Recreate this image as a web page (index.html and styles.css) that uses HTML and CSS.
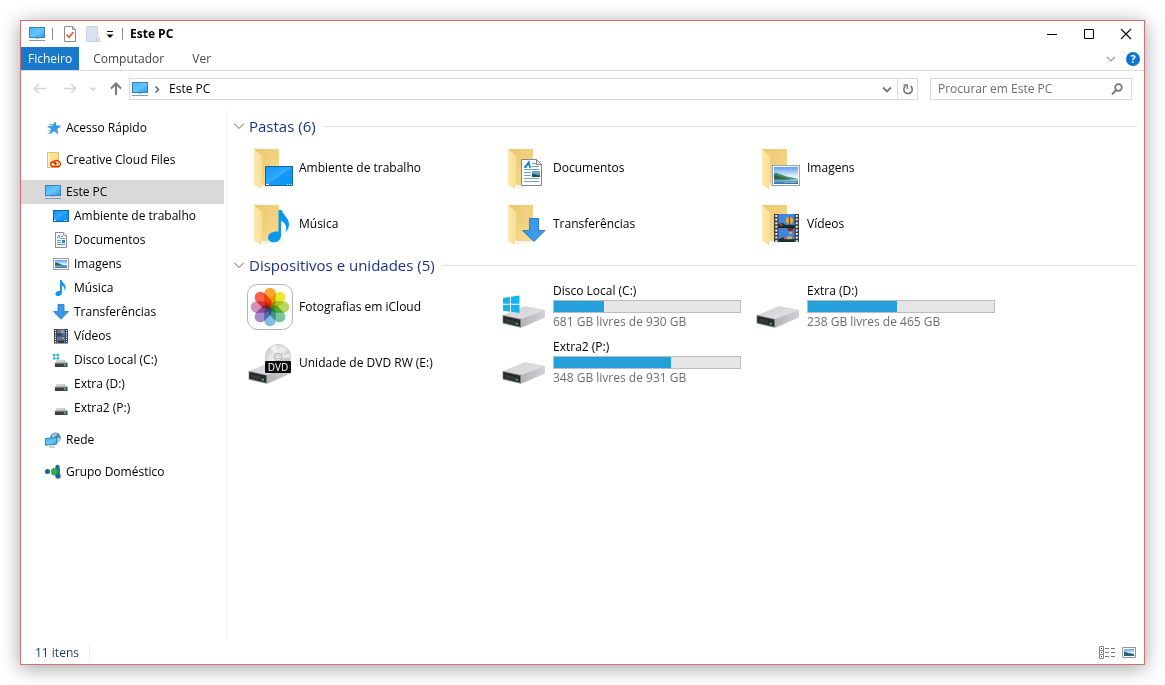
FILE: index.html
```
<!DOCTYPE html>
<html lang="pt">
<head>
    <meta charset="UTF-8">
    <meta name="viewport" content="width=device-width, initial-scale=1.0">
    <title>Este PC</title>
    <link rel="stylesheet" href="styles.css">
</head>
<body>

<!--Ícones-->
<svg class="defs" aria-hidden="true">
    <defs>
        <linearGradient id="azul" x1="0" y1="0" x2="1" y2="1">
            <stop offset="0" stop-color="#45b4fb"/><stop offset=".5" stop-color="#62c6ff"/><stop offset="1" stop-color="#2e9eec"/>
        </linearGradient>
        <linearGradient id="trabalho" x1="0" y1="0" x2="1" y2="1">
            <stop offset="0" stop-color="#1193f5"/><stop offset=".5" stop-color="#33aaff"/><stop offset=".51" stop-color="#149bfa"/><stop offset="1" stop-color="#0d93f2"/>
        </linearGradient>
        <linearGradient id="amarelo" x1="0" y1="0" x2="1" y2="1">
            <stop offset="0" stop-color="#e9c76f"/><stop offset="1" stop-color="#f9dc8e"/>
        </linearGradient>
        <linearGradient id="aba" x1="0" y1="0" x2="1" y2="0">
            <stop offset="0" stop-color="#fde9ae"/><stop offset="1" stop-color="#f8dd94"/>
        </linearGradient>
        <linearGradient id="ceu" x1="0" y1="0" x2="0" y2="1">
            <stop offset="0" stop-color="#5b9ff0"/><stop offset=".5" stop-color="#d9edfb"/><stop offset="1" stop-color="#ffffff"/>
        </linearGradient>
        <linearGradient id="mar" x1="0" y1="0" x2="0" y2="1">
            <stop offset="0" stop-color="#8fc3dc"/><stop offset="1" stop-color="#2a6ea3"/>
        </linearGradient>
        <linearGradient id="tampa" x1="0" y1="0" x2="1" y2="1">
            <stop offset="0" stop-color="#cfcfd1"/><stop offset="1" stop-color="#e6e6e8"/>
        </linearGradient>
        <linearGradient id="lado" x1="0" y1="0" x2="1" y2="0">
            <stop offset="0" stop-color="#b4b4b8"/><stop offset="1" stop-color="#d2d2d5"/>
        </linearGradient>
        <linearGradient id="disco" x1="0" y1="0" x2="1" y2="1">
            <stop offset="0" stop-color="#bfc4c6"/><stop offset=".45" stop-color="#eceeee"/><stop offset=".6" stop-color="#cdd1d2"/><stop offset="1" stop-color="#b8bdbf"/>
        </linearGradient>
    </defs>

    <symbol id="i-pc" viewBox="0 0 16 16">
        <rect x=".5" y="1.500" width="15" height="10" fill="url(#azul)" stroke="#3f7fa8"/>
        <path d="M6 12h4v1H6z" fill="#a9c4d4"/>
        <path d="M0 14.500h16" stroke="#7d9db5"/>
    </symbol>
    <symbol id="i-estrela" viewBox="0 0 16 16">
        <path d="M10.300 2l.8 3.900 4.400.3-3.700 2.500.9 4.800-3.600-2.700-4.200 2.900 1.500-4.700-3-2.500 4.200-.4z" fill="#2fa0e8" stroke="#2384c6" stroke-width=".7"/>
        <path d="M4 4.500h4M2.500 7.500h3M3.500 10.500h3M2.500 13h3" stroke="#6fb9ea" stroke-width=".9"/>
    </symbol>
    <symbol id="i-creative" viewBox="0 0 16 16">
        <path d="M2.500.5h11v15h-11z" fill="#fbe08f" stroke="#dfc06a"/>
        <path d="M3 1h2v14H3z" fill="#fff0bf"/>
        <path d="M12.500 14.500H8.300a2.400 2.400 0 1 1 .5-4.700c1.400.2 2 1.600 2.800 2.400M11 12.800c-1.300-1-1.300-2.300-2.500-2.700A3.400 3.400 0 0 1 14.400 10a2.500 2.500 0 0 1-1.900 4.500" fill="none" stroke="#dd2a12" stroke-width="1.300"/>
    </symbol>
    <symbol id="i-trabalho" viewBox="0 0 16 16">
        <rect x=".5" y="2.500" width="15" height="11" fill="url(#trabalho)" stroke="#0c67ad"/>
        <path d="M1 12.500h2M11 12.500h1M13 12.500h1" stroke="#fff"/>
    </symbol>
    <symbol id="i-doc" viewBox="0 0 16 16">
        <path d="M2.500.5h8l3 3v12h-11z" fill="#fff" stroke="#8b8f93"/>
        <path d="M10.500.5v3h3" fill="#e9eaeb" stroke="#8b8f93" stroke-width=".8"/>
        <path d="M4 6.500L6 3l1 3.500M8 4.500h2M8 6.500h4M4 8.500h4M4 10.500h4M4 12.500h8" fill="none" stroke="#3a93bd" stroke-width=".9"/>
        <path d="M9 8h3v3H9z" fill="#3f7d91"/>
    </symbol>
    <symbol id="i-imagem" viewBox="0 0 16 16">
        <rect x=".5" y="2.500" width="15" height="11" fill="#fff" stroke="#9aa0a5"/>
        <path d="M2 4h12v8H2z" fill="url(#ceu)"/>
        <path d="M2 6.500c2 0 3 .5 5 1.500s4 1.200 7 1.300V10H2z" fill="#2e5b50"/>
        <path d="M2 9.500h12V12H2z" fill="url(#mar)"/>
    </symbol>
    <symbol id="i-musica" viewBox="0 0 16 16">
        <path d="M7 0h1.600c.3 2.600 4.500 4 4 8.300-.1 1-.6 1.900-1.200 2.600.6-2.800-.7-4.600-2.500-5.500V12.500c0 2-1.400 3.500-3.600 3.500-1.700 0-2.900-.9-2.900-2.300C2.400 12 4.200 10.800 7 11z" fill="#1096ee"/>
    </symbol>
    <symbol id="i-seta" viewBox="0 0 16 16">
        <path d="M5 .5h6v7h4.500L8 15.300.5 7.500H5z" fill="#3b98e6" stroke="#2479c4" stroke-width=".8"/>
    </symbol>
    <symbol id="i-video" viewBox="0 0 16 16">
        <path d="M1 1h14v14.500H1z" fill="#3a3a3c"/>
        <path d="M4 1.500h8v6.200H4zM4 8.500h8V15H4z" fill="#4a78bd"/>
        <path d="M8 2h3v3H8zM9 9h2v2H9z" fill="#c9963c"/>
        <path d="M4 5.500h5v2H4zM5 12.500h6V15H5z" fill="#30383a"/>
        <path d="M2.500 2v13M13.500 2v13" stroke="#fff" stroke-width="1.200" stroke-dasharray="1.200 1"/>
    </symbol>
    <symbol id="i-drive" viewBox="0 0 16 16">
        <path d="M4 8h8.500l2 3H2z" fill="#cfd0d2"/>
        <path d="M2 11h12.500v4H2z" fill="#3c4143"/>
        <path d="M2 11.200h12.500" stroke="#85898b"/>
        <path d="M11 12.500h2v1.200h-2z" fill="#6be08b"/>
    </symbol>
    <symbol id="i-drivewin" viewBox="0 0 16 16">
        <use href="#i-drive"/>
        <path d="M0 2h2.500v2.200H0zM3.500 2H6v2.200H3.500zM0 5.200h2.500v2.200H0zM3.500 5.200H6v2.200H3.500z" fill="#1fb2dd"/>
    </symbol>
    <symbol id="i-rede" viewBox="0 0 16 16">
        <circle cx="10.500" cy="5.800" r="5.300" fill="#4a8db4"/>
        <path d="M7 3.500c1-2 4-2.500 5.500-1.500-.5 1.500-2 1-2.500 2.500s-2 1.500-3 1zM12 6c1.500-.8 3 0 3.500.5-.3 2-1.500 3.500-3 4z" fill="#9fd0e4"/>
        <path d="M.5 6.500l11-.8v6.500l-11 1z" fill="url(#azul)" stroke="#3c83b4"/>
        <path d="M4 15h6" stroke="#86a9c0"/>
    </symbol>
    <symbol id="i-grupo" viewBox="0 0 16 16">
        <path d="M9 7.500L12 2v12z" fill="#249b64"/>
        <circle cx="9.500" cy="7.800" r="3.700" fill="#36b14a"/>
        <circle cx="2.500" cy="7.500" r="2.500" fill="#1e5a9c"/>
        <circle cx="12.500" cy="3" r="2.200" fill="#1b6a94"/>
        <circle cx="13" cy="12" r="2.700" fill="#20659f"/>
        <path d="M11 4.500l4-.5v6.500l-3-.5z" fill="#238a7c"/>
    </symbol>

    <symbol id="g-pasta" viewBox="0 0 48 48">
        <path d="M12 41l6 3.500 16-3z" fill="#000" opacity=".06"/>
        <path d="M8 5h25v36H12z" fill="url(#amarelo)"/>
        <path d="M8 5l8.500 7.500V39l-1.500 6-7-4z" fill="url(#aba)"/>
        <path d="M16.500 38.500V45L15 45z" fill="#fff"/>
        <path d="M16.500 12.500V39" stroke="#ecd07f" stroke-width=".7"/>
    </symbol>
    <symbol id="g-trabalho" viewBox="0 0 48 48">
        <use href="#g-pasta"/>
        <rect x="19.500" y="22.500" width="27" height="19" fill="url(#trabalho)" stroke="#15699e"/>
        <path d="M20 40.500h3M41 40.500h1M43 40.500h1M45 40.500h1" stroke="#fff"/>
    </symbol>
    <symbol id="g-doc" viewBox="0 0 48 48">
        <use href="#g-pasta"/>
        <path d="M21.500 15.500h15l5 5v21h-20z" fill="#fff" stroke="#85888b"/>
        <path d="M36.500 15.500v5h5z" fill="#e6e7e8" stroke="#85888b"/>
        <path d="M25 23l4-5.500 1 5.500M26.500 21h3M24 23h3M29 23h2" fill="none" stroke="#1382cb" stroke-width="1.300"/>
        <path d="M32 19.500h4M32 22.500h7M24 25.500h15M24 28.500h7M24 31.500h7M24 34.500h15M24 37.500h15" stroke="#7d9fba"/>
        <path d="M32 27h8v6h-8z" fill="#68a5d6"/>
        <path d="M32 29.500l4 1 4 1V33h-8z" fill="#285348"/>
    </symbol>
    <symbol id="g-imagem" viewBox="0 0 48 48">
        <use href="#g-pasta"/>
        <rect x="18.500" y="21.500" width="27" height="20" fill="#fff" stroke="#9aa2a9"/>
        <path d="M20 23h24v17H20z" fill="url(#ceu)"/>
        <path d="M20 35h24v5H20z" fill="url(#mar)"/>
        <path d="M20 29c3-1 5 1 7 1.500 3 .5 4 2 8 2.500s6 1.500 9 2l-24 .5z" fill="#4a8a72"/>
        <path d="M20 31c4 0 6 2 9 2.500l8 2H20z" fill="#2f6646"/>
        <path d="M31 36.500h12M30 38.500h12" stroke="#a9cfe2" stroke-width=".6"/>
    </symbol>
    <symbol id="g-musica" viewBox="0 0 48 48">
        <use href="#g-pasta"/>
        <path d="M32.500 10H36c.5 5 7.500 8 7 15-.2 2.800-1.800 5.500-3.700 7.500 2-5.500.5-9.500-4.300-11.500v14.500c0 4-3 6.800-7 6.800-3.600 0-6-1.800-6-4.800 0-4 4.500-6.500 10.500-6z" fill="#0c97ef"/>
    </symbol>
    <symbol id="g-seta" viewBox="0 0 48 48">
        <use href="#g-pasta"/>
        <path d="M29.500 18.500h9v12H45L34 41.500l-11.500-11h7z" fill="#3c9aea" stroke="#2a7bc6"/>
    </symbol>
    <symbol id="g-video" viewBox="0 0 48 48">
        <use href="#g-pasta"/>
        <path d="M20 14h25v28H20z" fill="#3d3d3f"/>
        <path d="M24.500 14h16v13h-16zM24.500 28h16v14h-16z" fill="#4285dc"/>
        <circle cx="35.500" cy="20.500" r="3.500" fill="#e8b92e"/>
        <path d="M34.700 17h1.600v7h-1.600z" fill="#b3342a"/>
        <path d="M34.500 24.500h2V26h-2z" fill="#3a2418"/>
        <path d="M24.500 24l4-1 3 2h9v2h-16zM24.500 39l5-1.500 4 2 7-.5v3h-16z" fill="#17302e"/>
        <path d="M33 28h7l-2 3.500h-3z" fill="#8c2430"/>
        <path d="M35 31.500h3V34h-3z" fill="#e0a92c"/>
        <path d="M32.500 39a3 3 0 0 1 6 0z" fill="#dcae37"/>
        <path d="M26 25h2.500M30 38.500h2" stroke="#c95a34" stroke-width="1.500"/>
        <path d="M22.300 15v27M42.800 15v27" stroke="#f2f2f2" stroke-width="2" stroke-dasharray="2 1.600"/>
        <path d="M24 27.500h17" stroke="#1c1c1c"/>
    </symbol>
    <symbol id="g-fotos" viewBox="0 0 48 48">
        <rect x="1.500" y="1.500" width="45" height="45" rx="10" fill="#fff" stroke="#b4b4b6"/>
        <g class="petalas">
            <rect x="18.200" y="4.700" width="11.600" height="19.300" rx="5.800" fill="#fba72f"/>
            <rect x="18.200" y="4.700" width="11.600" height="19.300" rx="5.800" fill="#ece62d" transform="rotate(45 24 24)"/>
            <rect x="18.200" y="4.700" width="11.600" height="19.300" rx="5.800" fill="#b9d85c" transform="rotate(90 24 24)"/>
            <rect x="18.200" y="4.700" width="11.600" height="19.300" rx="5.800" fill="#76c7a0" transform="rotate(135 24 24)"/>
            <rect x="18.200" y="4.700" width="11.600" height="19.300" rx="5.800" fill="#86bde6" transform="rotate(180 24 24)"/>
            <rect x="18.200" y="4.700" width="11.600" height="19.300" rx="5.800" fill="#a58cc8" transform="rotate(225 24 24)"/>
            <rect x="18.200" y="4.700" width="11.600" height="19.300" rx="5.800" fill="#d78fbb" transform="rotate(270 24 24)"/>
            <rect x="18.200" y="4.700" width="11.600" height="19.300" rx="5.800" fill="#f8604a" transform="rotate(315 24 24)"/>
        </g>
    </symbol>
    <symbol id="g-drive" viewBox="0 0 48 48">
        <path d="M3 32l20-8q2-1 4-.5l17 3q1.500.5 1 1.500L22 37z" fill="url(#tampa)"/>
        <path d="M21 36l24-9v7.500l-23 10h-1z" fill="url(#lado)"/>
        <path d="M2.700 32L21 36v8.700L2.700 40.500z" fill="#77797b"/>
        <path d="M3.300 33l16.700 3.800v6.700L3.300 39.500z" fill="#262a2b"/>
        <path d="M5 36.500l9 2M5 38l9 2" stroke="#4b4f50" stroke-width=".7"/>
        <path d="M15.500 39.500l2.500.5v1.800l-2.500-.5z" fill="#4fb35c"/>
    </symbol>
    <symbol id="g-drivewin" viewBox="0 0 48 48">
        <use href="#g-drive"/>
        <path d="M3 15l7-1v6.800H3zM11 13.800l8.500-1.200v8.200H11zM3 21.800h7v6.900l-7-1zM11 21.800h8.500V30L11 28.800z" fill="#12b3ee"/>
    </symbol>
</svg>

<div class="janela">
    <!--Barra de título-->
    <header class="titulo">
        <svg class="ico"><use href="#i-pc"/></svg>
        <span class="divisor"></span>
        <button class="botao" aria-label="Propriedades">
            <svg class="ico" viewBox="0 0 16 16"><path d="M2.500.5h8l3 3v12h-11z" fill="#fff" stroke="#8d8d8d"/><path d="M10.500.5v3h3" fill="none" stroke="#8d8d8d"/><path d="M4.500 8.500l2.500 2.700L11.500 6" fill="none" stroke="#df5a1f" stroke-width="1.600"/></svg>
        </button>
        <button class="botao" aria-label="Nova pasta">
            <svg class="ico" viewBox="0 0 16 16"><path d="M1.500.5h11v11h2v4h-13z" fill="#d9e4f3" stroke="#c9d6e8"/><path d="M11.500 11.500v4" stroke="#b9c9df"/></svg>
        </button>
        <button class="botao" aria-label="Personalizar barra">
            <svg class="seta" viewBox="0 0 8 8"><path d="M1 1.500h6" stroke="#111"/><path d="M.5 4.500h7L4 8z" fill="#111"/></svg>
        </button>
        <span class="divisor"></span>
        <h1>Este PC</h1>
        <div class="controlos">
            <button class="botao" aria-label="Minimizar"><svg viewBox="0 0 12 12"><path d="M1 6.500h10" stroke="#000"/></svg></button>
            <button class="botao" aria-label="Maximizar"><svg viewBox="0 0 12 12"><path d="M1.500 1.500h9v9h-9z" fill="none" stroke="#000"/></svg></button>
            <button class="botao" aria-label="Fechar"><svg viewBox="0 0 12 12"><path d="M1 1l10 10M11 1L1 11" stroke="#000" stroke-width="1.100"/></svg></button>
        </div>
    </header>

    <!--Separadores-->
    <nav class="separadores">
        <a href="#" class="ativo">Ficheiro</a>
        <a href="#">Computador</a>
        <a href="#">Ver</a>
        <div class="ajuda">
            <button class="botao" aria-label="Expandir friso"><svg class="chev" viewBox="0 0 10 10"><path d="M1 3l4 4 4-4" fill="none" stroke="#9a9a9a" stroke-width="1.200"/></svg></button>
            <button class="interrogacao" aria-label="Ajuda">?</button>
        </div>
    </nav>

    <!--Endereço e pesquisa-->
    <div class="navegacao">
        <button class="botao" aria-label="Anterior"><svg class="nav" viewBox="0 0 14 14"><path d="M13 6.500H1.500M6 2L1.300 6.500 6 11" fill="none" stroke="#d6d6d6" stroke-width="1.500"/></svg></button>
        <button class="botao seguinte" aria-label="Seguinte"><svg class="nav" viewBox="0 0 14 14"><path d="M1 6.500h11.500M8 2l4.700 4.500L8 11" fill="none" stroke="#d6d6d6" stroke-width="1.500"/></svg></button>
        <button class="botao" aria-label="Recentes"><svg class="mini" viewBox="0 0 8 8"><path d="M1.500 2.500L4 5l2.500-2.500" fill="none" stroke="#cfcfcf" stroke-width="1.400"/></svg></button>
        <button class="botao" aria-label="Acima"><svg class="nav" viewBox="0 0 14 14"><path d="M7 13V2M2 6.500L7 1.500l5 5" fill="none" stroke="#787878" stroke-width="2"/></svg></button>
        <div class="endereco">
            <svg class="ico"><use href="#i-pc"/></svg>
            <svg class="mini" viewBox="0 0 8 8"><path d="M2.500 1.500L5.500 4.500l-3 3" fill="none" stroke="#666" stroke-width="1.500"/></svg>
            <a href="#">Este PC</a>
            <button class="botao lista" aria-label="Localizações"><svg class="chev" viewBox="0 0 10 10"><path d="M1 3.500l4 4 4-4" fill="none" stroke="#777" stroke-width="1.800"/></svg></button>
            <button class="botao atualizar" aria-label="Atualizar"><svg class="nav" viewBox="0 0 14 14"><path d="M9.500 4a4.200 4.200 0 1 1-5.200.2" fill="none" stroke="#777" stroke-width="1.600"/><path d="M2.500 3H6.300V7" fill="none" stroke="#777" stroke-width="1.500"/></svg></button>
        </div>
        <label class="pesquisa">
            <input type="text" placeholder="Procurar em Este PC" aria-label="Procurar em Este PC">
            <svg class="nav" viewBox="0 0 14 14"><circle cx="8.500" cy="5.500" r="3.300" fill="none" stroke="#777" stroke-width="1.700"/><path d="M6.200 8l-4.200 4.300" stroke="#777" stroke-width="1.900"/></svg>
        </label>
    </div>

    <div class="conteudo">
        <!--Árvore-->
        <nav class="arvore">
            <a href="#"><svg class="ico"><use href="#i-estrela"/></svg>Acesso Rápido</a>
            <a href="#" class="espaco"><svg class="ico"><use href="#i-creative"/></svg>Creative Cloud Files</a>
            <a href="#" class="espaco selecionado"><svg class="ico"><use href="#i-pc"/></svg>Este PC</a>
            <a href="#" class="filho"><svg class="ico"><use href="#i-trabalho"/></svg>Ambiente de trabalho</a>
            <a href="#" class="filho"><svg class="ico"><use href="#i-doc"/></svg>Documentos</a>
            <a href="#" class="filho"><svg class="ico"><use href="#i-imagem"/></svg>Imagens</a>
            <a href="#" class="filho"><svg class="ico"><use href="#i-musica"/></svg>Música</a>
            <a href="#" class="filho"><svg class="ico"><use href="#i-seta"/></svg>Transferências</a>
            <a href="#" class="filho"><svg class="ico"><use href="#i-video"/></svg>Vídeos</a>
            <a href="#" class="filho"><svg class="ico"><use href="#i-drivewin"/></svg>Disco Local (C:)</a>
            <a href="#" class="filho"><svg class="ico"><use href="#i-drive"/></svg>Extra (D:)</a>
            <a href="#" class="filho"><svg class="ico"><use href="#i-drive"/></svg>Extra2 (P:)</a>
            <a href="#" class="espaco"><svg class="ico"><use href="#i-rede"/></svg>Rede</a>
            <a href="#" class="espaco"><svg class="ico"><use href="#i-grupo"/></svg>Grupo Doméstico</a>
        </nav>

        <main class="painel">
            <section>
                <h2><svg class="chev" viewBox="0 0 10 10"><path d="M0 2.500l5 5 5-5" fill="none" stroke="#666"/></svg>Pastas (6)</h2>
                <div class="grelha">
                    <a href="#" class="item"><svg><use href="#g-trabalho"/></svg>Ambiente de trabalho</a>
                    <a href="#" class="item"><svg><use href="#g-doc"/></svg>Documentos</a>
                    <a href="#" class="item"><svg><use href="#g-imagem"/></svg>Imagens</a>
                    <a href="#" class="item"><svg><use href="#g-musica"/></svg>Música</a>
                    <a href="#" class="item"><svg><use href="#g-seta"/></svg>Transferências</a>
                    <a href="#" class="item"><svg><use href="#g-video"/></svg>Vídeos</a>
                </div>
            </section>

            <section>
                <h2><svg class="chev" viewBox="0 0 10 10"><path d="M0 2.500l5 5 5-5" fill="none" stroke="#666"/></svg>Dispositivos e unidades (5)</h2>
                <div class="grelha">
                    <a href="#" class="item"><svg><use href="#g-fotos"/></svg>Fotografias em iCloud</a>
                    <a href="#" class="item"><svg><use href="#g-drivewin"/></svg>
                        <span class="unidade">Disco Local (C:)
                            <progress value="27" max="100" aria-label="Espaço usado em C:"></progress>
                            <small>681 GB livres de 930 GB</small>
                        </span>
                    </a>
                    <a href="#" class="item"><svg><use href="#g-drive"/></svg>
                        <span class="unidade">Extra (D:)
                            <progress value="48" max="100" aria-label="Espaço usado em D:"></progress>
                            <small>238 GB livres de 465 GB</small>
                        </span>
                    </a>
                    <a href="#" class="item">
                        <svg viewBox="0 0 48 48">
                            <use href="#g-drive"/>
                            <circle cx="32" cy="18" r="12.600" fill="url(#disco)" stroke="#b0b4b6" stroke-width=".6"/>
                            <path d="M32 18L24 8.500a12 12 0 0 1 6-2.500zM32 18l12-4a12 12 0 0 1 .5 5z" fill="#fff" opacity=".6"/>
                            <circle cx="32" cy="18" r="3.800" fill="#e1e3e4" stroke="#a0a5a8" stroke-width=".8"/>
                            <circle cx="32" cy="18" r="1.600" fill="#fff" stroke="#a0a5a8" stroke-width=".6"/>
                            <rect x="19" y="22" width="26" height="12" rx="1" fill="#0c0c0c"/>
                            <text x="32" y="32" class="dvd-texto">DVD</text>
                        </svg>
                        Unidade de DVD RW (E:)
                    </a>
                    <a href="#" class="item"><svg><use href="#g-drive"/></svg>
                        <span class="unidade">Extra2 (P:)
                            <progress value="63" max="100" aria-label="Espaço usado em P:"></progress>
                            <small>348 GB livres de 931 GB</small>
                        </span>
                    </a>
                </div>
            </section>
        </main>
    </div>

    <!--Barra de estado-->
    <footer class="estado">
        <span>11 itens</span>
        <div class="vistas">
            <button class="botao" aria-label="Detalhes"><svg class="ico" viewBox="0 0 16 16"><path d="M.5 1.500h4v12h-4zM.5 5.500h4M.5 9.500h4" fill="none" stroke="#8a8a8a"/><path d="M2 3.500h1M2 7.500h1M2 11.500h1" stroke="#444"/><path d="M6 3.500h4M12 3.500h4M6 7.500h4M12 7.500h4M6 11.500h4M12 11.500h4" stroke="#777"/></svg></button>
            <button class="botao" aria-label="Mosaicos"><svg class="ico" viewBox="0 0 16 16"><path d="M1.500 2.500h13v10h-13z" fill="#fff" stroke="#8f959a"/><path d="M3 4h10v7H3z" fill="url(#ceu)"/><path d="M3 6.500l5 1.500 5 1v2H3z" fill="#2c6472"/></svg></button>
        </div>
    </footer>
</div>

</body>
</html>
```
FILE: styles.css
```
* {
    box-sizing: border-box;
}

body {
    margin: 0;
    padding: 20px;
    height: 100vh;
    background-color: #fff;
    color: #000;
    font-family: "Open Sans", "Noto Sans", sans-serif;
    font-size: 12px;
    line-height: 16px;
}

a {
    color: inherit;
    text-decoration: none;
}

svg {
    display: block;
    flex: none;
}

.defs {
    position: absolute;
    width: 0;
    height: 0;
}

.botao {
    display: flex;
    align-items: center;
    justify-content: center;
    border: 0;
    padding: 0;
    background: none;
}

.ico {
    width: 16px;
    height: 16px;
}

.nav {
    width: 14px;
    height: 14px;
}

.chev {
    width: 10px;
    height: 10px;
}

.mini,
.seta {
    width: 8px;
    height: 8px;
}

.janela {
    display: flex;
    flex-direction: column;
    min-height: 100%;
    background-color: #fff;
    border: 1px solid #d07072;
    box-shadow: 0 3px 18px rgba(0, 0, 0, .38);
}

/* barra de título */
.titulo {
    display: flex;
    align-items: center;
    gap: 7px;
    height: 26px;
    padding: 0 12px 0 8px;
}

.titulo h1 {
    margin: 0;
    font-size: 12px;
    font-weight: 700;
}

.divisor {
    width: 1px;
    height: 12px;
    background-color: #8a8a8a;
}

.divisor + .botao {
    margin-left: 2px;
}

.titulo .seta {
    margin: 0 1px 0 -2px;
}

.controlos {
    display: flex;
    gap: 25px;
    margin-left: auto;
}

.controlos svg {
    width: 12px;
    height: 12px;
}

/* separadores */
.separadores {
    display: flex;
    height: 24px;
    border-bottom: 1px solid #dadbdc;
    color: #444;
}

.separadores a {
    padding: 4px 14px;
}

.separadores .ativo {
    padding: 4px 7px;
    background-color: #1979ca;
    color: #fff;
}

.ajuda {
    display: flex;
    align-items: center;
    gap: 10px;
    margin-left: auto;
    padding-right: 4px;
}

.interrogacao {
    width: 14px;
    height: 14px;
    border: 0;
    border-radius: 50%;
    padding: 0;
    background-color: #0a74d0;
    color: #fff;
    font-family: inherit;
    font-size: 11px;
    font-weight: 700;
    line-height: 14px;
}

/* endereço e pesquisa */
.navegacao {
    display: flex;
    align-items: center;
    gap: 12px;
    padding: 7px 12px 6px 12px;
}

.seguinte {
    margin-left: 4px;
}

.endereco {
    display: flex;
    flex: 1;
    align-items: center;
    margin-left: -6px;
    height: 22px;
    border: 1px solid #d9d9d9;
    padding-left: 2px;
}

.endereco .mini {
    margin: 0 8px 0 5px;
}

.lista {
    width: 20px;
    height: 20px;
    margin-left: auto;
}

.atualizar {
    width: 20px;
    height: 20px;
    border-left: 1px solid #d9d9d9;
}

.pesquisa {
    display: flex;
    align-items: center;
    width: 202px;
    height: 22px;
    border: 1px solid #d9d9d9;
    padding: 0 7px;
}

.pesquisa input {
    flex: 1;
    min-width: 0;
    border: 0;
    padding: 0;
    outline: 0;
    font: inherit;
}

.pesquisa input::placeholder {
    color: #6d6d6d;
}

/* árvore */
.conteudo {
    display: flex;
    flex: 1;
}

.arvore {
    width: 206px;
    margin-right: 2px;
    border-right: 1px solid #f3f3f3;
    padding: 10px 2px 0 0;
}

.arvore a {
    display: flex;
    align-items: center;
    gap: 5px;
    height: 24px;
    padding-left: 24px;
}

.arvore .filho {
    padding-left: 32px;
}

.arvore .espaco {
    margin-top: 8px;
}

.arvore .selecionado {
    background-color: #d9d9d9;
}

/* painel */
.painel {
    flex: 1;
    padding: 8px 7px 0 5px;
}

.painel h2 {
    display: flex;
    align-items: center;
    gap: 5px;
    margin: 0;
    color: #1e3287;
    font-size: 15px;
    font-weight: 400;
    line-height: 24px;
}

.painel h2::after {
    content: "";
    flex: 1;
    height: 1px;
    margin-left: 2px;
    background-color: #e2e2e2;
}

.grelha {
    display: grid;
    grid-template-columns: repeat(auto-fill, 254px);
    padding: 2px 0 1px 12px;
}

.item {
    display: flex;
    align-items: center;
    gap: 5px;
    height: 56px;
}

.item > svg {
    width: 48px;
    height: 48px;
}

.unidade {
    width: 188px;
    padding-bottom: 2px;
}

.unidade small {
    display: block;
    color: #6d6d6d;
    font-size: 12px;
}

progress {
    display: block;
    width: 100%;
    height: 13px;
    margin: 1px 0;
    border: 1px solid #bcbcbc;
    background-color: #e6e6e6;
    appearance: none;
}

progress::-webkit-progress-bar {
    background-color: #e6e6e6;
}

progress::-webkit-progress-value {
    background-color: #26a0da;
}

.petalas rect {
    mix-blend-mode: multiply;
}

.dvd-texto {
    fill: #fff;
    font-size: 10px;
    text-anchor: middle;
}

/* barra de estado */
.estado {
    display: flex;
    align-items: center;
    height: 23px;
    padding: 0 7px 0 14px;
    color: #1e395b;
}

.estado span {
    padding-right: 10px;
    border-right: 1px solid #eee;
}

.vistas {
    display: flex;
    gap: 6px;
    margin-left: auto;
}
```
